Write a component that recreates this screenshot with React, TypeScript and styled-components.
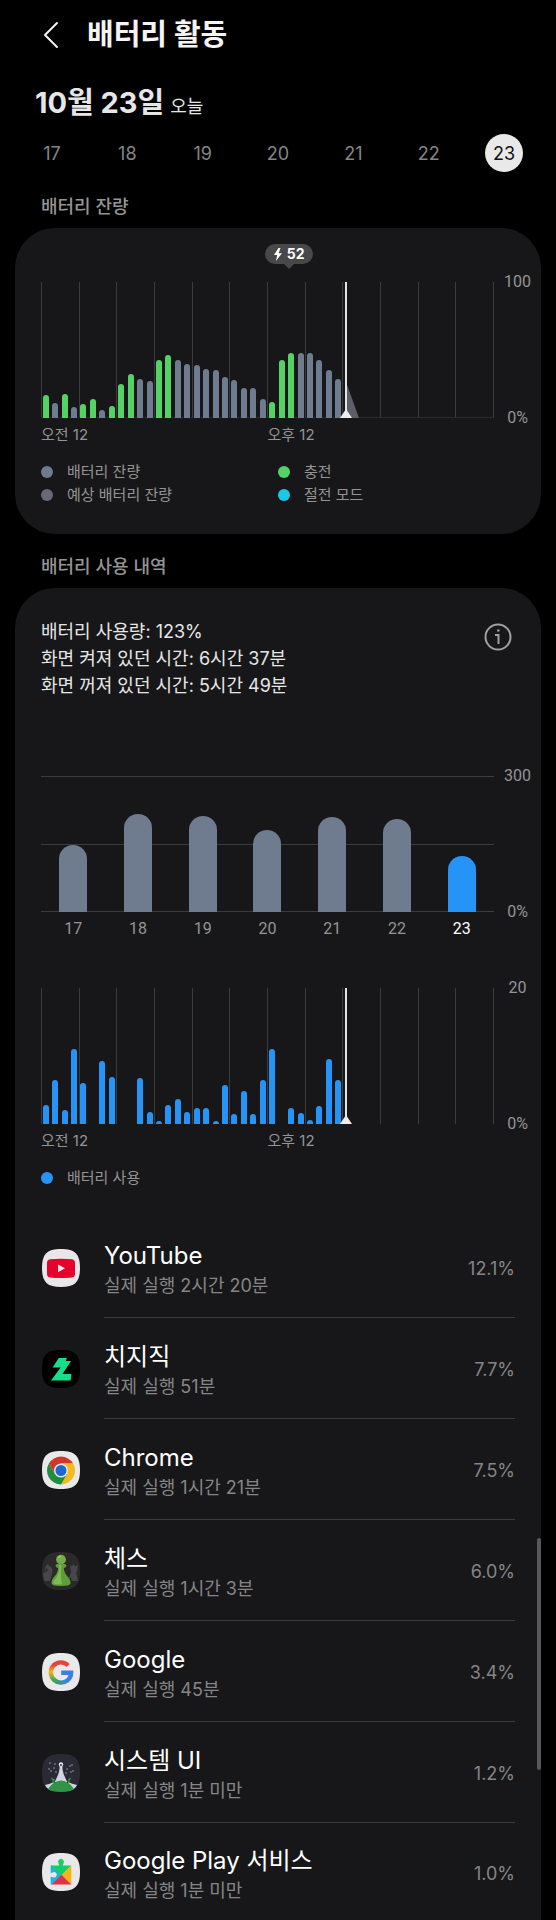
import React from 'react';
import styled, { createGlobalStyle } from 'styled-components';

const color = {
  card: '#171719',
  text: '#f4f4f4',
  soft: '#e6e6e6',
  muted: '#949496',
  dim: '#858587',
  line: '#3c3c3e',
  slate: '#6f7b8e',
  estimate: '#666a76',
  green: '#54d266',
  cyan: '#1cc8e8',
  blue: '#2693f7',
};

const uiFont = 'Inter, "Noto Sans CJK KR", sans-serif';
const chartFont = 'Roboto, "Noto Sans CJK KR", sans-serif';

const GlobalStyle = createGlobalStyle`
  * { box-sizing: border-box; }
  body {
    margin: 0;
    background: #000;
    color: ${color.text};
    font-family: ${uiFont};
    font-size: 18px;
  }
  h1, h2, p, ul, ol { margin: 0; padding: 0; }
  ul, ol { list-style: none; }
  button {
    padding: 0;
    border: 0;
    background: none;
    color: inherit;
    font: inherit;
    cursor: pointer;
  }
  svg { display: block; }
`;

const Screen = styled.main`
  display: flex;
  flex-direction: column;
`;

const TopBar = styled.header`
  display: flex;
  align-items: center;
  gap: 28px;
  height: 70px;
  padding: 0 43px;
`;

const BackButton = styled.button`
  display: flex;
`;

const PageTitle = styled.h1`
  font-size: 29px;
  line-height: 40px;
  font-weight: 700;
`;

const DateLine = styled.h2`
  display: flex;
  align-items: baseline;
  gap: 6px;
  margin: 10px 35px 8px;
  color: ${color.soft};
  font-size: 29px;
  line-height: 46px;
  font-weight: 700;

  small {
    font-size: 18px;
    line-height: 24px;
    font-weight: 400;
  }
`;

const DayPicker = styled.nav`
  display: flex;
  justify-content: space-between;
  padding: 0 33px 2px;
`;

const DayButton = styled.button<{ $active?: boolean }>`
  width: 38px;
  height: 38px;
  border-radius: 50%;
  background: ${p => (p.$active ? '#e9e9e9' : 'transparent')};
  color: ${p => (p.$active ? '#111' : color.dim)};
`;

const SectionTitle = styled.h2`
  margin: 20px 41px 8px;
  color: ${color.muted};
  font-size: 18px;
  line-height: 26px;
  font-weight: 500;
`;

const Card = styled.section<{ $open?: boolean }>`
  position: relative;
  margin: 0 15px;
  padding: ${p => (p.$open ? '30px 0 0' : '16px 0 28px')};
  border-radius: ${p => (p.$open ? '40px 40px 0 0' : '40px')};
  background: ${color.card};
`;

const ChartFrame = styled.div<{ $space: number }>`
  display: grid;
  grid-template-columns: 1fr 47px;
  margin-top: ${p => p.$space}px;
  padding-left: 26px;
  color: ${color.muted};
  font-family: ${chartFont};
`;

const Plot = styled.div`
  position: relative;
  height: 136px;
`;

const Scale = styled.div`
  display: flex;
  flex-direction: column;
  justify-content: space-between;
  margin: -11px 0;
  text-align: center;
  font-size: 16px;
  line-height: 22px;
`;

const GridLines = styled.div<{ $base?: boolean }>`
  position: absolute;
  inset: 0;
  display: grid;
  grid-template-columns: repeat(12, 1fr);
  border-right: 1px solid ${color.line};
  border-bottom: ${p => (p.$base ? `1px solid #2a2a2c` : '0')};

  i { border-left: 1px solid ${color.line}; }
`;

const LevelLines = styled.div`
  position: absolute;
  inset: 0;
  display: flex;
  flex-direction: column;
  justify-content: space-between;

  i { border-top: 1px solid ${color.line}; }
`;

const Columns = styled.div<{ $count: number }>`
  position: relative;
  display: grid;
  grid-template-columns: repeat(${p => p.$count}, 1fr);
  align-items: end;
  justify-items: center;
  height: 100%;
`;

const Bar = styled.div<{ $fill: string; $wide?: boolean }>`
  width: ${p => (p.$wide ? 28 : 6)}px;
  border-radius: ${p => (p.$wide ? '14px 14px 0 0' : '3px 3px 0 0')};
  background: ${p => p.$fill};
`;

const NowMarker = styled.svg`
  position: absolute;
  left: 67%;
  top: 0;
  margin-left: -5px;
`;

const Tooltip = styled.div`
  position: relative;
  display: flex;
  align-items: center;
  justify-content: center;
  gap: 5px;
  width: 48px;
  height: 20px;
  border-radius: 10px;
  background: #48484a;
  color: #fff;
  font-size: 14px;
  line-height: 20px;
  font-weight: 700;

  &::after {
    content: '';
    position: absolute;
    top: 20px;
    left: 19px;
    border: 5px solid transparent;
    border-top-color: #48484a;
    border-bottom: 0;
  }
`;

const TooltipRow = styled.div`
  display: grid;
  grid-template-columns: 55fr 45fr;
  padding: 0 47px 0 26px;

  ${Tooltip} {
    grid-column: 1;
    justify-self: end;
    margin-right: -23px;
  }
`;

const HourLabels = styled.div`
  display: grid;
  grid-template-columns: 1fr 1fr;
  margin-top: 6px;
  font-size: 15px;
  line-height: 22px;
  font-family: ${uiFont};
`;

const DayLabels = styled.div`
  display: grid;
  grid-template-columns: repeat(7, 1fr);
  margin-top: 6px;
  text-align: center;
  font-size: 16px;
  line-height: 22px;
`;

const DayLabel = styled.span<{ $active?: boolean }>`
  color: ${p => (p.$active ? '#fff' : color.muted)};
`;

const Legend = styled.ul`
  display: grid;
  grid-template-columns: 1fr 1fr;
  margin-top: 14px;
  padding: 0 26px;
  color: ${color.muted};
  font-size: 15px;
  line-height: 23px;
`;

const LegendItem = styled.li<{ $dot: string }>`
  display: flex;
  align-items: center;
  gap: 14px;

  &::before {
    content: '';
    width: 12px;
    height: 12px;
    border-radius: 50%;
    background: ${p => p.$dot};
  }
`;

const Summary = styled.div`
  display: flex;
  justify-content: space-between;
  align-items: flex-start;
  padding: 0 29px 0 26px;
  color: ${color.soft};
  line-height: 27px;
`;

const InfoButton = styled.button`
  margin-top: 5px;
`;

const AppList = styled.ul`
  margin-top: 28px;
`;

const AppRow = styled.li`
  display: grid;
  grid-template-columns: 38px 1fr;
  align-items: center;
  gap: 24px;
  padding: 0 26px 0 27px;
`;

const AppBody = styled.div`
  display: flex;
  align-items: center;
  justify-content: space-between;
  height: 101px;
  padding-top: 2px;
  border-bottom: 1px solid ${color.line};

  ${AppRow}:last-child & {
    height: 98px;
    border-bottom: 0;
  }
`;

const AppName = styled.p`
  color: #fff;
  font-size: 24px;
  line-height: 36px;
`;

const AppTime = styled.p`
  color: ${color.dim};
  line-height: 24px;
`;

const AppShare = styled.span`
  color: ${color.dim};
`;

const ScrollThumb = styled.div`
  position: absolute;
  right: 0;
  top: 71.3%;
  height: 17.4%;
  width: 4px;
  border-radius: 2px;
  background: #58585a;
`;

const days = [17, 18, 19, 20, 21, 22, 23];

const levels = [
  17, 11, 18, 8, 10, 14, 6, 9, 25, 32, 29, 27, 43, 46, 43, 40,
  39, 36, 35, 30, 28, 22, 22, 14, 12, 43, 48, 48, 48, 43, 35, 29,
];
const chargingSlots = new Set([0, 2, 4, 5, 7, 8, 9, 12, 13, 24, 25, 26]);

const usage = [
  2.8, 6.4, 2.1, 11, 6, 0, 9.2, 6.9, 0, 0, 6.8, 1.8, 0.5, 2.8, 3.7, 1.8,
  2.4, 2.4, 0.5, 5.8, 1.5, 4.9, 1.4, 6.4, 11, 0, 2.4, 1.6, 0.6, 2.7, 9.5, 6.5,
];

const dailyUsage = [148, 217, 212, 182, 209, 205, 123];

const squircle = 'M19 0C33 0 38 5 38 19S33 38 19 38 0 33 0 19 5 0 19 0Z';

function AppIcon({ fill, children }: { fill: string; children: React.ReactNode }) {
  return (
    <svg width="38" height="38" viewBox="0 0 38 38" aria-hidden="true">
      <path d={squircle} fill={fill} />
      {children}
    </svg>
  );
}

const YouTubeIcon = () => (
  <AppIcon fill="#e8e6e8">
    <path d="M8 10.3Q19 9 30 10.3 33 10.7 33 14V25Q33 28 30 28.4 19 29.8 8 28.4 5 28 5 25V14Q5 10.7 8 10.3Z" fill="#e6002d" />
    <path d="M16 15.4 23 19.3 16 23.3Z" fill="#f4e6ea" />
  </AppIcon>
);

const ChzzkIcon = () => (
  <AppIcon fill="#000">
    <path d="M16.8 8H25L23.6 10.9H29L20.5 24H29.4L28.6 30.6H9L18.7 17.5H10.6Z" fill="#13e089" />
  </AppIcon>
);

const ChromeIcon = () => (
  <AppIcon fill="#e9e9e9">
    <g transform="translate(19 19.5)">
      {['#d0362c', '#f4b91c', '#1f8d40'].map((c, i) => (
        <path key={c} d="M-12.12-7A14 14 0 0 1 12.12-7L0-7-6.06 3.5Z" fill={c} transform={`rotate(${i * 120})`} />
      ))}
      <circle r="7" fill="#e9e9e9" />
      <circle r="5.5" fill="#1d67d2" />
    </g>
  </AppIcon>
);

const ChessIcon = () => (
  <AppIcon fill="#2b2a28">
    <path d="M2 19 4 14 6 12 7 14Q11 15 10.5 20L9 25 11 29H3Q0 24 2 19Z" fill="#45474a" />
    <path d="M1.5 19 4.5 16 6.5 18 3 21Z" fill="#303133" />
    <path d="M28 13 30 14.5 31.5 12 33 14.5 36 13 35 19 34 20 36 29H26L29 20Z" fill="#45474a" />
    <path d="M8 30Q19 36 30 30L29 26H9Z" fill="#222220" />
    <circle cx="19" cy="7.6" r="4.9" fill="#72ad48" />
    <path d="M13.5 13.5Q14 11.5 19 11.5T24.5 13.5Q24.5 15.5 21.8 16 22 21 26 25 29 28 28.5 31.5 28 34 19 34T9.5 31.5Q9 28 12 25 16 21 16.2 16 13.5 15.5 13.5 13.5Z" fill="#5f9c3d" />
    <path d="M17 13Q18 20 14 26 11 29 11 31.5 15 33 20 32 18 24 19.500 13Z" fill="#7dbb54" />
    <path d="M16 6Q17 4.5 19 4.3" stroke="#9ad070" strokeWidth="1.2" fill="none" />
  </AppIcon>
);

const GoogleIcon = () => (
  <AppIcon fill="#e9e9e9">
    <defs>
      <linearGradient id="g-left" x1="0" y1="0" x2="0" y2="1">
        <stop offset="0" stopColor="#e4483a" />
        <stop offset="0.45" stopColor="#f0b91c" />
        <stop offset="1" stopColor="#3ea652" />
      </linearGradient>
      <linearGradient id="g-base" x1="0" y1="0" x2="1" y2="0">
        <stop offset="0" stopColor="#3ea652" />
        <stop offset="1" stopColor="#3a7fe6" />
      </linearGradient>
    </defs>
    <g fill="none" strokeWidth="4.4">
      <path d="M26.2 12.6A10.2 10.2 0 0 0 11.6 12.4" stroke="#e2453d" />
      <path d="M12 12A10.2 10.2 0 0 0 12.5 27.2" stroke="url(#g-left)" />
      <path d="M12 26.8A10.2 10.2 0 0 0 25.5 27.4" stroke="url(#g-base)" />
      <path d="M25.1 27.7A10.2 10.2 0 0 0 29.1 19.7H19.2" stroke="#3a80e8" />
    </g>
  </AppIcon>
);

const stars: Array<[number, number]> = [
  [8, 9], [13, 10], [7, 15], [9, 17], [12, 14], [14, 18], [30, 11], [28, 12], [31, 17], [25, 15], [29, 18], [24, 19],
];

const SystemUiIcon = () => (
  <AppIcon fill="#292a33">
    {stars.map(([x, y]) => (
      <circle key={`${x}-${y}`} cx={x} cy={y} r="0.7" fill="#b4b8c4" />
    ))}
    <path d="M19 9Q20.5 10 20.5 15 21 21 25.5 28H12.5Q17 21 17.5 15 17.5 10 19 9Z" fill="#cfd4e0" />
    <circle cx="19" cy="10.5" r="2.2" fill="#e8eaf0" />
    <circle cx="19" cy="11" r="1" fill="#292a33" />
    <path d="M3 31Q8 30 12 28V37Q5 36 3 31ZM35 31Q30 30 26 28V37Q33 36 35 31Z" fill="#cfd4e0" />
    <path d="M6 35Q11 27 19 26.5 27 27 32 35 28 38 19 38T6 35Z" fill="#2f9444" />
    <path d="M11 29V25M9.5 24 11 26M12.500 25 11 27M27 29V25M28.5 24 27 26" stroke="#2f9444" strokeWidth="1.4" />
  </AppIcon>
);

const PlayServicesIcon = () => (
  <AppIcon fill="#e9e7e8">
    <path d="M8.7 12.5V31.5H10L20 22 10.5 12.5Z" fill="#1fb4dc" />
    <path d="M8.7 12.5H17.2L16.6 10.5A2.9 2.9 0 1 1 21.4 10.5L20.8 12.5H29.3L19.5 22.5Z" fill="#14cf68" />
    <path d="M29.3 12.5V31.5L19.5 22Z" fill="#f6b414" />
    <path d="M9.5 31.5 19.5 21.8 29.3 31.5Z" fill="#e23048" />
    <path d="M8 20.5 10.5 19.6A2.7 2.7 0 1 1 10.5 24L8 23.5Z" fill="#e9e7e8" />
  </AppIcon>
);

const apps = [
  { name: 'YouTube', time: '실제 실행 2시간 20분', share: '12.1%', Icon: YouTubeIcon },
  { name: '치지직', time: '실제 실행 51분', share: '7.7%', Icon: ChzzkIcon },
  { name: 'Chrome', time: '실제 실행 1시간 21분', share: '7.5%', Icon: ChromeIcon },
  { name: '체스', time: '실제 실행 1시간 3분', share: '6.0%', Icon: ChessIcon },
  { name: 'Google', time: '실제 실행 45분', share: '3.4%', Icon: GoogleIcon },
  { name: '시스템 UI', time: '실제 실행 1분 미만', share: '1.2%', Icon: SystemUiIcon },
  { name: 'Google Play 서비스', time: '실제 실행 1분 미만', share: '1.0%', Icon: PlayServicesIcon },
];

function Now({ forecast }: { forecast?: boolean }) {
  return (
    <NowMarker width="20" height="136" viewBox="0 0 20 136" aria-hidden="true">
      {forecast && <path d="M6 100 19 136H6Z" fill="#5c5f68" />}
      <path d="M6 0V134" stroke="#e4e4e6" strokeWidth="2" />
      <path d="M6 127 12 136H0Z" fill="#ededed" />
    </NowMarker>
  );
}

function HourlyChart({ values, max, fill, space, base, forecast }: {
  values: number[];
  max: number;
  fill: (slot: number) => string;
  space: number;
  base?: boolean;
  forecast?: boolean;
}) {
  return (
    <ChartFrame $space={space}>
      <Plot>
        <GridLines $base={base}>
          {Array.from({ length: 12 }, (_, i) => <i key={i} />)}
        </GridLines>
        <Columns $count={48}>
          {values.map((v, i) => (
            <Bar key={i} $fill={fill(i)} style={{ height: `${(v / max) * 100}%` }} />
          ))}
        </Columns>
        <Now forecast={forecast} />
      </Plot>
      <Scale><span>{max}</span><span>0%</span></Scale>
      <HourLabels><span>오전 12</span><span>오후 12</span></HourLabels>
    </ChartFrame>
  );
}

export default function App() {
  return (
    <Screen>
      <GlobalStyle />
      <TopBar>
        <BackButton aria-label="뒤로">
          <svg width="16" height="28" viewBox="0 0 16 28" fill="none" stroke="#f4f4f4" strokeWidth="2" strokeLinecap="round" strokeLinejoin="round">
            <path d="M14 2 2 14 14 26" />
          </svg>
        </BackButton>
        <PageTitle>배터리 활동</PageTitle>
      </TopBar>

      <DateLine>10월 23일<small>오늘</small></DateLine>
      <DayPicker aria-label="날짜">
        {days.map(d => (
          <DayButton key={d} $active={d === 23}>{d}</DayButton>
        ))}
      </DayPicker>

      <SectionTitle>배터리 잔량</SectionTitle>
      <Card>
        <TooltipRow>
          <Tooltip>
            <svg width="8" height="13" viewBox="0 0 8 13" aria-hidden="true">
              <path d="M4.5 0 0 7H3.2L2 13 8 5.2H4.6L6.5 0Z" fill="#fff" />
            </svg>
            52
          </Tooltip>
        </TooltipRow>
        <HourlyChart
          values={levels}
          max={100}
          space={18}
          fill={i => (chargingSlots.has(i) ? color.green : color.slate)}
          base
          forecast
        />
        <Legend>
          <LegendItem $dot={color.slate}>배터리 잔량</LegendItem>
          <LegendItem $dot={color.green}>충전</LegendItem>
          <LegendItem $dot={color.estimate}>예상 배터리 잔량</LegendItem>
          <LegendItem $dot={color.cyan}>절전 모드</LegendItem>
        </Legend>
      </Card>

      <SectionTitle>배터리 사용 내역</SectionTitle>
      <Card $open>
        <Summary>
          <div>
            <p>배터리 사용량: 123%</p>
            <p>화면 켜져 있던 시간: 6시간 37분</p>
            <p>화면 꺼져 있던 시간: 5시간 49분</p>
          </div>
          <InfoButton aria-label="정보">
            <svg width="28" height="28" viewBox="0 0 28 28" fill="none" stroke="#a0a0a2" strokeWidth="2">
              <circle cx="14" cy="14" r="12.5" />
              <path d="M11 12H14.5V21" />
              <circle cx="14.3" cy="7.5" r="1.3" fill="#a0a0a2" stroke="none" />
            </svg>
          </InfoButton>
        </Summary>

        <ChartFrame $space={77}>
          <Plot>
            <LevelLines><i /><i /><i /></LevelLines>
            <Columns $count={7}>
              {dailyUsage.map((v, i) => (
                <Bar key={i} $wide $fill={i === 6 ? color.blue : color.slate} style={{ height: `${v / 3}%` }} />
              ))}
            </Columns>
          </Plot>
          <Scale><span>300</span><span>0%</span></Scale>
          <DayLabels>
            {days.map(d => <DayLabel key={d} $active={d === 23}>{d}</DayLabel>)}
          </DayLabels>
        </ChartFrame>

        <HourlyChart values={usage} max={20} space={48} fill={() => color.blue} />
        <Legend>
          <LegendItem $dot={color.blue}>배터리 사용</LegendItem>
        </Legend>

        <AppList>
          {apps.map(({ name, time, share, Icon }) => (
            <AppRow key={name}>
              <Icon />
              <AppBody>
                <div>
                  <AppName>{name}</AppName>
                  <AppTime>{time}</AppTime>
                </div>
                <AppShare>{share}</AppShare>
              </AppBody>
            </AppRow>
          ))}
        </AppList>
        <ScrollThumb />
      </Card>
    </Screen>
  );
}
